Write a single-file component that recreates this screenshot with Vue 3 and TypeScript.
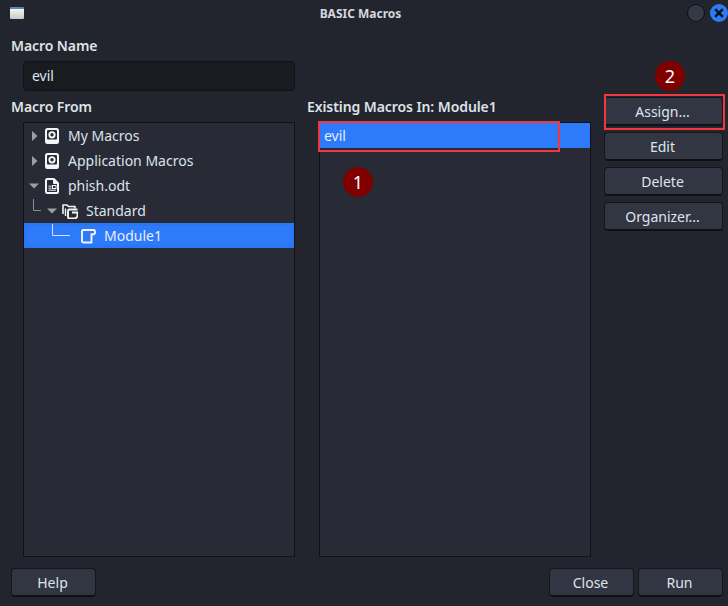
<script setup lang="ts">
const sideButtons: string[] = ['Assign...', 'Edit', 'Delete', 'Organizer...']
</script>

<template>
  <div class="dialog">
    <header class="titlebar">
      <span class="win-icon"></span>
      <span class="title">BASIC Macros</span>
      <span class="controls">
        <span class="ctl-min"></span>
        <span class="ctl-close">
          <svg width="12" height="12" viewBox="0 0 12 12"><path d="M2.2 2.2l7.6 7.6M9.8 2.2l-7.6 7.6" stroke="#10131a" stroke-width="2.6" fill="none"/></svg>
        </span>
      </span>
    </header>

    <main class="body">
      <div class="label name-label">Macro Name</div>
      <div class="name-row"><div class="input">evil</div></div>

      <div class="columns">
        <section class="col-from">
          <div class="label">Macro From</div>
          <div class="panel tree">
            <div class="row">
              <svg class="arrow" width="8" height="12" viewBox="0 0 8 12"><path d="M0 1l5.5 5L0 11z" fill="#9b9ea5"/></svg>
              <svg class="ico" width="14" height="16" viewBox="0 0 14 16"><rect width="14" height="16" rx="2.5" fill="#f4f5f6"/><rect x="2" y="2" width="10" height="9.5" rx="1" fill="#282b36"/><circle cx="7" cy="6.8" r="3.6" fill="#f4f5f6"/><circle cx="7" cy="6.8" r="1.7" fill="#282b36"/></svg>
              <span>My Macros</span>
            </div>
            <div class="row">
              <svg class="arrow" width="8" height="12" viewBox="0 0 8 12"><path d="M0 1l5.5 5L0 11z" fill="#9b9ea5"/></svg>
              <svg class="ico" width="14" height="16" viewBox="0 0 14 16"><rect width="14" height="16" rx="2.5" fill="#f4f5f6"/><rect x="2" y="2" width="10" height="9.5" rx="1" fill="#282b36"/><circle cx="7" cy="6.8" r="3.6" fill="#f4f5f6"/><circle cx="7" cy="6.8" r="1.7" fill="#282b36"/></svg>
              <span>Application Macros</span>
            </div>
            <div class="row">
              <svg class="arrow down" width="10" height="12" viewBox="0 0 10 12"><path d="M0 3.5h10l-5 5z" fill="#9b9ea5"/></svg>
              <svg class="ico" width="14" height="16" viewBox="0 0 14 16"><path d="M2.5 1h6.3L13 5.2v8.3a1.5 1.5 0 0 1-1.5 1.5h-9A1.5 1.5 0 0 1 1 13.5v-11A1.5 1.5 0 0 1 2.5 1z" fill="none" stroke="#f4f5f6" stroke-width="2" stroke-linejoin="round"/><path d="M8.5 1v4.5H13" fill="#f4f5f6" stroke="#f4f5f6"/><path d="M3.5 8.2h3M3.5 10.2h3M3.5 12.2h7.5" stroke="#f4f5f6" stroke-width="1"/><rect x="7.5" y="7.5" width="3.5" height="3" fill="none" stroke="#f4f5f6"/></svg>
              <span>phish.odt</span>
            </div>
            <div class="row lvl1">
              <svg class="branch" width="10" height="14" viewBox="0 0 10 14"><path d="M.5 0v11.5H8" stroke="#8a8d94" fill="none"/></svg>
              <svg class="arrow down" width="10" height="12" viewBox="0 0 10 12"><path d="M0 3.5h10l-5 5z" fill="#9b9ea5"/></svg>
              <svg class="ico" width="16" height="16" viewBox="0 0 16 16"><path d="M1 11V2h4l1.5 1.5H13v2" fill="none" stroke="#f4f5f6" stroke-width="1.6" stroke-linejoin="round"/><path d="M3.5 13V5.5" stroke="#f4f5f6" stroke-width="1.4"/><path d="M15.5 6.5H7.5a1.5 1.5 0 0 0-1.5 1.5v6a1.5 1.5 0 0 0 1.5 1.5h6l2-2V9.5H10" fill="none" stroke="#f4f5f6" stroke-width="1.9"/></svg>
              <span>Standard</span>
            </div>
            <div class="row lvl2 selected">
              <svg class="branch2" width="20" height="14" viewBox="0 0 20 14"><path d="M.5 0v11.5H18" stroke="#cfe0ff" fill="none"/></svg>
              <svg class="ico" width="16" height="16" viewBox="0 0 16 16"><path d="M3 2h10.5A1.5 1.5 0 0 1 15 3.500v1.500a1.200 1.200 0 0 1-1.200 1.200H11.500V14.500H3.500A1.500 1.500 0 0 1 2 13V3.500A1.500 1.500 0 0 1 3 2z" fill="none" stroke="#f4f5f6" stroke-width="1.900" stroke-linejoin="round"/></svg>
              <span>Module1</span>
            </div>
          </div>
        </section>

        <section class="col-list">
          <div class="label">Existing Macros In: Module1</div>
          <div class="panel list">
            <div class="list-row">evil</div>
            <span class="outline box1"></span>
            <span class="badge badge1">1</span>
          </div>
        </section>

        <aside class="col-btns">
          <span class="badge badge2">2</span>
          <div class="btn-wrap">
            <button v-for="b in sideButtons" :key="b" class="btn side">{{ b }}</button>
            <span class="outline box2"></span>
          </div>
        </aside>
      </div>

      <footer class="footer">
        <button class="btn foot">Help</button>
        <div class="foot-right">
          <button class="btn foot">Close</button>
          <button class="btn foot">Run</button>
        </div>
      </footer>
    </main>
  </div>
</template>

<style>
html, body { margin: 0; padding: 0; background: #22252e; }
</style>

<style scoped>
.dialog {
  width: 728px;
  height: 606px;
  overflow: hidden;
  background: #22252e;
  color: #e4e6ea;
  font-family: "Noto Sans", sans-serif;
  font-size: 14px;
  display: flex;
  flex-direction: column;
}
.titlebar {
  height: 28px;
  flex: none;
  display: flex;
  align-items: center;
  justify-content: center;
  position: relative;
}
.title { font-size: 12px; font-weight: 700; color: #d6d8dc; margin-top: -2px; margin-left: -7px; }
.win-icon {
  position: absolute;
  left: 10px;
  top: 7px;
  width: 14px;
  height: 12px;
  box-sizing: border-box;
  border-top: 2px solid #5f82bb;
  background: linear-gradient(#f5f6f4, #c7cbc4);
  border-radius: 1px;
}
.controls {
  position: absolute;
  right: 0;
  top: 4px;
  display: flex;
  gap: 5px;
  align-items: center;
}
.ctl-min {
  width: 18px;
  height: 18px;
  box-sizing: border-box;
  border-radius: 50%;
  background: #353945;
  border: 1px solid #0d0f13;
}
.ctl-close {
  width: 18px;
  height: 18px;
  border-radius: 50%;
  background: #2a7bf5;
  display: flex;
  align-items: center;
  justify-content: center;
}
.body { flex: 1; display: flex; flex-direction: column; padding: 0 5px 9px 11px; min-height: 0; }
.label { font-weight: 600; font-size: 14px; letter-spacing: -0.08px; line-height: 20px; color: #dfe2e6; }
.name-label { margin-top: 8px; }
.name-row { padding: 5px 0 6px 12px; width: 272px; }
.input {
  width: 272px;
  height: 30px;
  box-sizing: border-box;
  background: #191b21;
  border: 1px solid #101217;
  border-radius: 4px;
  padding: 0 8px;
  line-height: 28px;
  color: #dfe6ee;
}
.columns { flex: 1; display: flex; min-height: 0; }
.col-from { width: 296px; display: flex; flex-direction: column; }
.col-list { width: 284px; display: flex; flex-direction: column; }
.col-from .panel { margin-left: 12px; width: 272px; }
.col-list .panel { margin-left: 12px; width: 272px; }
.panel {
  flex: 1;
  margin-top: 5px;
  box-sizing: border-box;
  border: 1px solid #0f1116;
  background: #282b36;
  position: relative;
}
.row {
  height: 25px;
  display: flex;
  align-items: center;
  padding-left: 8px;
  color: #dde3ea;
  white-space: nowrap;
}
.row .arrow { margin-right: 5px; width: 8px; flex: none; }
.row .arrow.down { width: 10px; margin-left: -3px; margin-right: 6px; }
.row .ico { margin-right: 9px; flex: none; }
.lvl1 { padding-left: 9px; }
.branch { margin-right: 4px; flex: none; margin-top: -10px; }
.row.lvl1 .arrow.down { margin-left: 0; margin-right: 5px; }
.row.lvl1 .ico { margin-right: 8px; }
.lvl2 { padding-left: 28px; }
.branch2 { margin-right: 8px; flex: none; margin-top: -10px; }
.row.lvl2 .ico { margin-right: 8px; }
.selected { background: #2d7bfb; color: #e8eefc; box-shadow: inset 0 0 0 3px #2a76f4; }
.list-row {
  height: 25px;
  background: #2d7bfb;
  line-height: 25px;
  padding-left: 4px;
  color: #e8eefc;
}
.outline {
  position: absolute;
  box-sizing: border-box;
  border: 2px solid #f0383d;
  pointer-events: none;
}
.box1 { left: -2px; top: -2px; width: 242px; height: 31px; }
.badge {
  position: absolute;
  width: 30px;
  height: 30px;
  border-radius: 50%;
  background: #800000;
  color: #fff;
  font-size: 18px;
  line-height: 30px;
  text-align: center;
}
.badge1 { left: 23px; top: 44px; }
.col-btns { flex: 1; position: relative; }
.badge2 { left: 64px; top: -36px; }
.btn-wrap {
  position: relative;
  margin-left: 13px;
  width: 119px;
  display: flex;
  flex-direction: column;
  gap: 6px;
}
.box2 { left: 0; top: -3px; width: 121px; height: 36px; }
.btn {
  height: 29px;
  box-sizing: border-box;
  background: #323643;
  border: 1px solid #14161c;
  border-bottom: 2px solid #0e1014;
  border-radius: 4px;
  color: #dfe4ea;
  font-family: inherit;
  font-size: 14px;
  padding: 0 2px 0 0;
}
.side { width: 119px; }
.footer { display: flex; justify-content: space-between; padding-top: 11px; flex: none; }
.foot { width: 85px; }
.foot-right { display: flex; gap: 4px; }
</style>
